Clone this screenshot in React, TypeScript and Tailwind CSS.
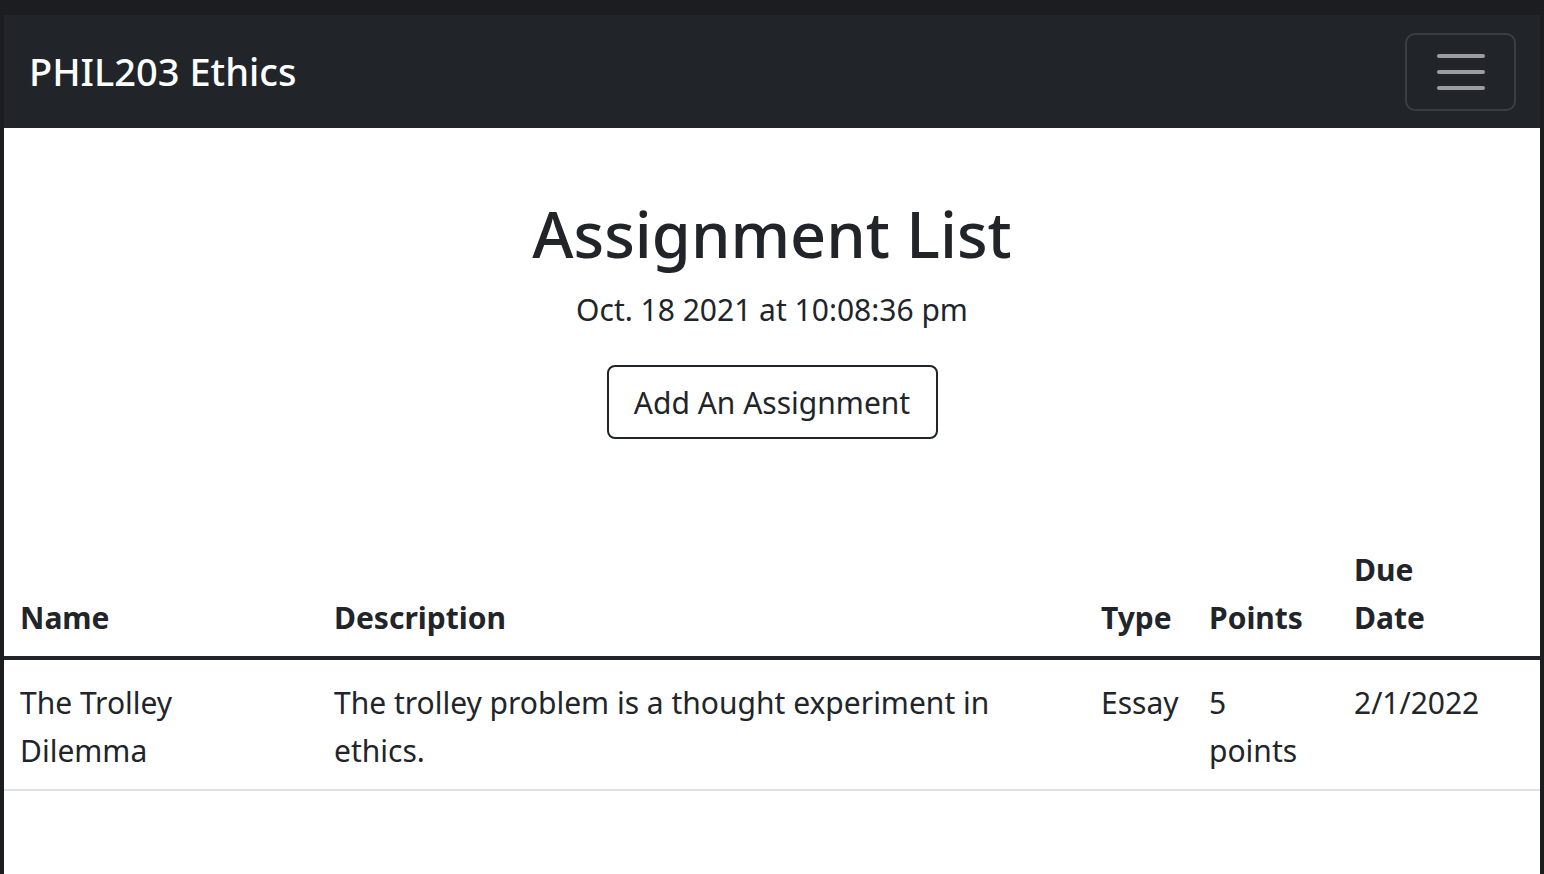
import React from "react";

const rows = [
  {
    name: "The Trolley Dilemma",
    description: "The trolley problem is a thought experiment in ethics.",
    type: "Essay",
    due: "2/1/2022",
  },
];

const App = () => {
  return (
    <div
      className="h-screen overflow-hidden bg-[#1c1d20] pt-[15px] px-[4px] text-[#212529]"
      style={{ fontFamily: '"Noto Sans", "Open Sans", sans-serif' }}
    >
      <nav className="flex h-[113px] items-center justify-between bg-[#212529] pl-[25px] pr-[24px]">
        <span className="text-[38px] font-medium text-white">PHIL203 Ethics</span>
        <button className="flex h-[78px] w-[111px] flex-col items-center justify-center gap-[12px] rounded-[10px] border-2 border-[#3b3e42]">
          <span className="h-[4px] w-[48px] rounded-full bg-[#9a9c9f]" />
          <span className="h-[4px] w-[48px] rounded-full bg-[#9a9c9f]" />
          <span className="h-[4px] w-[48px] rounded-full bg-[#9a9c9f]" />
        </button>
      </nav>

      <main className="h-full bg-white pt-[63px]">
        <div className="flex flex-col items-center">
          <h1 className="text-[63px] font-medium leading-[86px]">Assignment List</h1>
          <p className="mt-[9px] text-[30px] leading-[48px]">Oct. 18 2021 at 10:08:36 pm</p>
          <button className="mt-[31px] h-[74px] w-[331px] rounded-[8px] border-2 border-[#212529] text-[30px]">
            Add An Assignment
          </button>
        </div>

        <table className="mt-[93px] w-full table-fixed text-left text-[30px] leading-[48px]">
          <colgroup>
            <col className="w-[314px]" />
            <col className="w-[767px]" />
            <col className="w-[108px]" />
            <col className="w-[145px]" />
            <col />
          </colgroup>
          <thead>
            <tr className="border-b-4 border-[#212529] align-bottom">
              <th className="px-[16px] py-[14px] font-bold">Name</th>
              <th className="px-[16px] py-[14px] font-bold">Description</th>
              <th className="px-[16px] py-[14px] font-bold">Type</th>
              <th className="px-[16px] py-[14px] font-bold">Points</th>
              <th className="px-[16px] py-[14px] font-bold">
                Due
                <br />
                Date
              </th>
            </tr>
          </thead>
          <tbody>
            {rows.map((row) => (
              <tr key={row.name} className="border-b-2 border-[#dee2e6] align-top">
                <td className="px-[16px] pt-[19px] pb-[14px]">{row.name}</td>
                <td className="px-[16px] pt-[19px] pb-[14px]">{row.description}</td>
                <td className="px-[16px] pt-[19px] pb-[14px]">{row.type}</td>
                <td className="px-[16px] pt-[19px] pb-[14px]">
                  5
                  <br />
                  points
                </td>
                <td className="px-[16px] pt-[19px] pb-[14px]">{row.due}</td>
              </tr>
            ))}
          </tbody>
        </table>
      </main>
    </div>
  );
};

export default App;
